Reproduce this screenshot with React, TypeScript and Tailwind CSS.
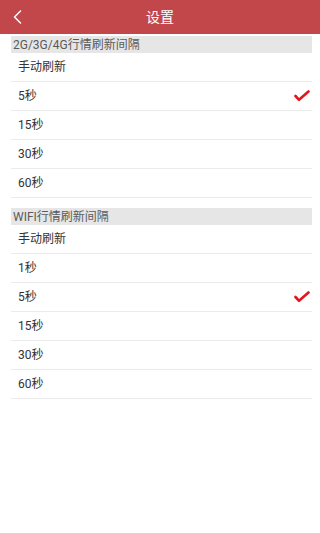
const font = "font-['Roboto','Noto_Sans_CJK_SC',sans-serif]";

function Check() {
  return (
    <svg width="16" height="12" viewBox="0 0 16 12" fill="none">
      <path d="M1.5 6 L5 9.8 L14.5 1.5" stroke="#e3161d" strokeWidth="2.6" strokeLinecap="round" strokeLinejoin="round" />
    </svg>
  );
}

interface Row {
  label: string;
  checked?: boolean;
}

function Section({ title, rows, className }: { title: string; rows: Row[]; className?: string }) {
  return (
    <div className={`ml-[11px] mr-[8px] ${className ?? ""}`}>
      <div className="h-[17px] bg-[#e6e6e6] pl-[2px] flex items-center text-[12px] text-[#5a5a5a] leading-none">
        {title}
      </div>
      {rows.map((r, i) => (
        <div key={i} className="h-[29px] border-b border-[#ebebeb] flex items-center justify-between pl-[7px] pr-[2px] text-[12px] text-[#333]">
          <span>{r.label}</span>
          {r.checked && <Check />}
        </div>
      ))}
    </div>
  );
}

export default function App() {
  return (
    <div className={`w-[320px] h-[533px] bg-white ${font}`}>
      <div className="h-[34px] bg-[#c2474b] flex items-center relative">
        <svg className="absolute left-[13px] top-[10px]" width="9" height="14" viewBox="0 0 9 14" fill="none">
          <path d="M7.5 1 L1.5 7 L7.5 13" stroke="white" strokeWidth="1.5" strokeLinecap="round" strokeLinejoin="round" />
        </svg>
        <div className="flex-1 text-center text-white text-[14px]">设置</div>
      </div>
      <Section
        className="mt-[2px]"
        title="2G/3G/4G行情刷新间隔"
        rows={[{ label: "手动刷新" }, { label: "5秒", checked: true }, { label: "15秒" }, { label: "30秒" }, { label: "60秒" }]}
      />
      <Section
        className="mt-[10px]"
        title="WIFI行情刷新间隔"
        rows={[{ label: "手动刷新" }, { label: "1秒" }, { label: "5秒", checked: true }, { label: "15秒" }, { label: "30秒" }, { label: "60秒" }]}
      />
    </div>
  );
}
